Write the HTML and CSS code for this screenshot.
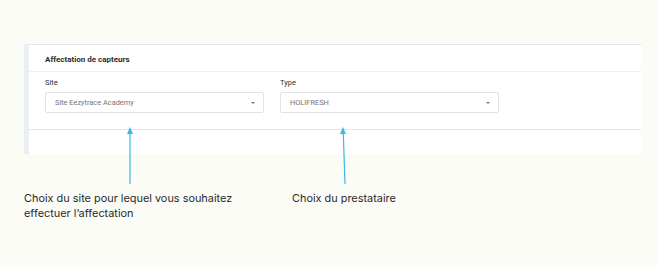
FILE: index.html
```html
<!DOCTYPE html>
<html>
<head>
<meta name="viewport" content="width=device-width, initial-scale=1">
<title>Affectation de capteurs</title>
<link rel="stylesheet" href="styles.css">
</head>
<body>
<div class="page">
  <div class="shot">
    <div class="card">
      <div class="card-head">Affectation de capteurs</div>
      <div class="card-body">
        <div class="field">
          <label>Site</label>
          <div class="select">
            <span>Site Eezytrace Academy</span>
            <span class="caret"></span>
          </div>
        </div>
        <div class="field">
          <label>Type</label>
          <div class="select">
            <span>HOLIFRESH</span>
            <span class="caret"></span>
          </div>
        </div>
      </div>
    </div>
  </div>

  <div class="notes">
    <p class="note note-site">Choix du site pour lequel vous souhaitez effectuer l’affectation</p>
    <p class="note note-type">Choix du prestataire</p>
  </div>

  <svg class="arrows" width="657" height="267" viewBox="0 0 657 267">
    <line x1="130" y1="133" x2="130" y2="184" stroke="#3bb9e3" stroke-width="1.2"/>
    <polygon points="130,127 127,134 133,134" fill="#3bb9e3"/>
    <line x1="343.3" y1="133" x2="345" y2="184" stroke="#3bb9e3" stroke-width="1.2"/>
    <polygon points="343,127 340,134 346,134" fill="#3bb9e3"/>
  </svg>
</div>
</body>
</html>
```

FILE: styles.css
```css
body {
  margin: 0;
  background: #fcfcf7;
  font-family: Roboto, "Liberation Sans", sans-serif;
}

.page {
  position: relative;
  width: 657px;
  height: 267px;
  overflow: hidden;
}

.shot {
  margin: 44px 0 0 24px;
  width: 612px;
  height: 110px;
  border-left: 5px solid #eaeff6;
  background: #fff;
}

.card {
  border-top: 1px solid #e3e6ec;
  border-bottom: 1px solid #e6e6e6;
  background: #fff;
}

.card-head {
  height: 26px;
  line-height: 30px;
  padding-left: 16px;
  font-size: 8px;
  font-weight: 700;
  color: #2b2b2b;
  border-bottom: 1px solid #f1f1f1;
}

.card-body {
  display: flex;
  gap: 16px;
  padding: 6px 16px 16px 16px;
}

.field {
  width: 219px;
}

.field label {
  display: block;
  font-size: 7.5px;
  color: #333;
  height: 14px;
  line-height: 10px;
}

.select {
  height: 19px;
  border: 1px solid #e2e2e2;
  border-radius: 2px;
  display: flex;
  align-items: center;
  justify-content: space-between;
  padding: 0 8px 0 9px;
  font-size: 7.4px;
  color: #757575;
}

.caret {
  width: 0;
  height: 0;
  border-left: 2.5px solid transparent;
  border-right: 2.5px solid transparent;
  border-top: 2.5px solid #777;
}

.notes {
  display: flex;
  margin-top: 37px;
  font-family: Inter, "Noto Sans", sans-serif;
  font-size: 10.9px;
  line-height: 15px;
  color: #2a2a2a;
}

.note {
  margin: 0;
}

.note-site {
  margin-left: 24px;
  width: 225px;
}

.note-type {
  margin-left: 43px;
}

.arrows {
  position: absolute;
  left: 0;
  top: 0;
}
```
